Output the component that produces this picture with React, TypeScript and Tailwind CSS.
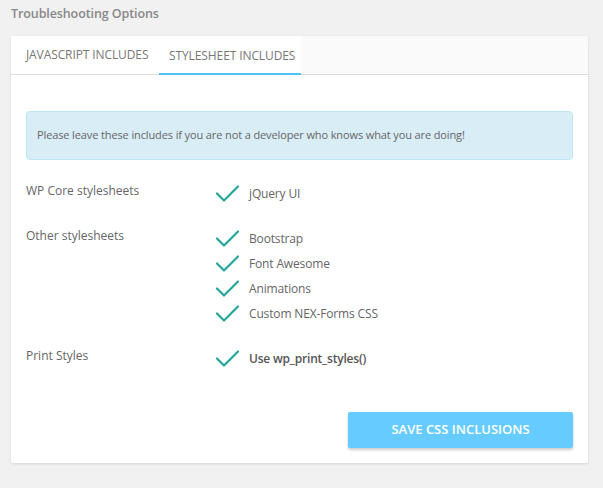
import React from "react";

const Check = () => (
    <svg width="23" height="17" viewBox="0 0 23 17" fill="none" className="flex-none">
        <path d="M1 8.5 L8 15.5 L22 1.5" stroke="#26a69a" strokeWidth="2.2" strokeLinecap="round" strokeLinejoin="round" />
    </svg>
);

function CheckItem({ label, bold }: { label: string; bold?: boolean }) {
    return (
        <div className="flex items-center h-[25px] gap-[10px]">
            <Check />
            <span className={bold ? "font-semibold text-[#555] tracking-[-0.2px]" : "text-[#666] tracking-[-0.15px]"}>{label}</span>
        </div>
    );
}

const rows: { label: string; items: { label: string; bold?: boolean }[] }[] = [
    { label: "WP Core stylesheets", items: [{ label: "jQuery UI" }] },
    {
        label: "Other stylesheets",
        items: [
            { label: "Bootstrap" },
            { label: "Font Awesome" },
            { label: "Animations" },
            { label: "Custom NEX-Forms CSS" },
        ],
    },
    { label: "Print Styles", items: [{ label: "Use wp_print_styles()", bold: true }] },
];

export default function App() {
    return (
        <div
            className="min-h-[488px] bg-[#f1f1f1] px-[11px] text-[12px] text-[#666]"
            style={{ fontFamily: '"Open Sans", "Noto Sans", sans-serif' }}
        >
            <div className="h-[36px] pt-[5px] text-[12.5px] font-semibold text-[#888] tracking-[-0.1px]">Troubleshooting Options</div>

            <div className="w-[577px] bg-white rounded-[2px] shadow-[0_1px_3px_rgba(0,0,0,0.12)]">
                {/* Tabs */}
                <div className="flex h-[39px] bg-[#fafafa] border-b border-[#dddddd] tracking-[-0.1px]">
                    <div className="w-[148px] bg-white pl-[15px] flex items-center text-[#777]">JAVASCRIPT INCLUDES</div>
                    <div className="w-[142px] bg-white pl-[10px] flex items-center text-[#777] border-b-2 border-[#4fc3f7] -mb-px pt-[2px]">
                        STYLESHEET INCLUDES
                    </div>
                </div>

                <div className="px-[15px] pt-[36px] pb-[15px]">
                    <div className="h-[49px] flex items-center pl-[10px] rounded-[4px] border border-[#bce8f1] bg-[#d9edf7] text-[11px] tracking-[-0.12px] text-[#666]">
                        Please leave these includes if you are not a developer who knows what you are doing!
                    </div>

                    <div className="mt-[21px] flex flex-col gap-[20px]">
                        {rows.map((row) => (
                            <div key={row.label} className="flex">
                                <div className="w-[190px] pt-[2px] text-[#666] leading-[15px]">{row.label}</div>
                                <div className="flex flex-col">
                                    {row.items.map((it) => (
                                        <CheckItem key={it.label} label={it.label} bold={it.bold} />
                                    ))}
                                </div>
                            </div>
                        ))}
                    </div>

                    <div className="mt-[41px] flex justify-end">
                        <button className="w-[225px] h-[36px] rounded-[2px] bg-[#66ccff] text-white text-[13px] font-semibold shadow-[0_2px_3px_rgba(0,0,0,0.2)]">
                            SAVE CSS INCLUSIONS
                        </button>
                    </div>
                </div>
            </div>
        </div>
    );
}
